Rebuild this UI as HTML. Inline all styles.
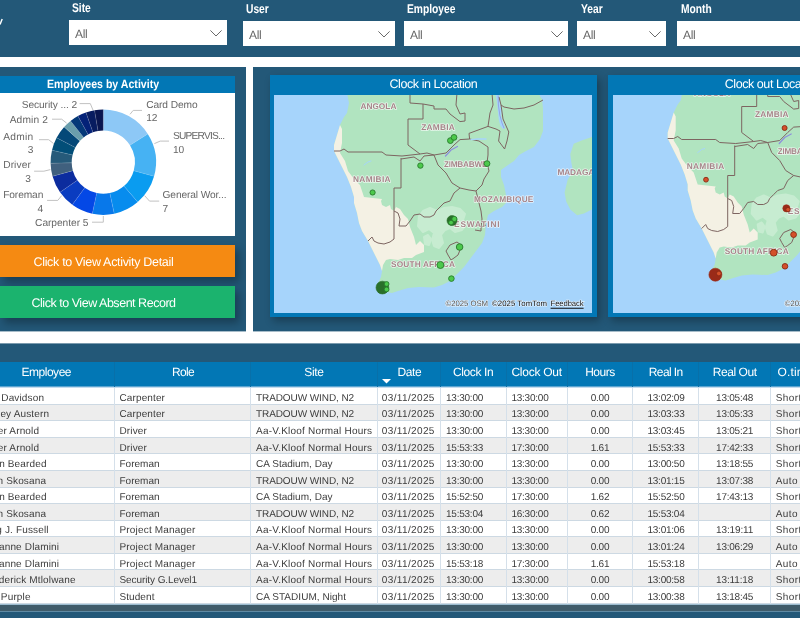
<!DOCTYPE html>
<html>
<head>
<meta charset="utf-8">
<title>Dashboard</title>
<style>
*{box-sizing:border-box;margin:0;padding:0}
html,body{width:800px;height:618px;overflow:hidden;background:#fff;font-family:"Liberation Sans",sans-serif;text-rendering:geometricPrecision}
.abs{position:absolute}
#hdr{position:absolute;left:0;top:0;width:800px;height:57px;background:#235878}
.lbl{position:absolute;color:#fff;font-weight:bold;font-size:12.6px;line-height:13px;top:1.5px;white-space:nowrap;transform:scaleX(.815);transform-origin:0 0}
.sel{position:absolute;background:#fff;height:25px;top:21px}
.sel span{position:absolute;left:6px;top:7px;font-size:12px;line-height:14px;color:#666;letter-spacing:-.3px}
.sel svg{position:absolute;top:10px}
#lp{position:absolute;left:0;top:67px;width:246px;height:264px;background:#235878}
#rp{position:absolute;left:253px;top:67px;width:547px;height:264px;background:#235878;overflow:hidden}
#tp{position:absolute;left:0;top:343px;width:800px;height:275px;background:#235878;box-shadow:inset 0 1px 0 #7b9bae}
.btn{position:absolute;left:0;width:235px;color:#fff;font-size:12.5px;white-space:nowrap;box-shadow:4px 5px 8px rgba(0,0,0,.3)}

#th{position:absolute;left:0;top:19px;width:800px;height:26px;background:#0277b5;border-bottom:1px solid #c5dcee;box-shadow:inset 0 -1px 0 #5ba5d0;color:#fff;font-size:12px;line-height:14px;white-space:nowrap;overflow:hidden;text-rendering:geometricPrecision}
#th span{position:absolute;top:3.4px}
#th i{position:absolute;top:0;width:1px;height:25px;background:#0870a9}
#tb{position:absolute;left:0;top:45px;width:800px;height:216px;background:#fff;overflow:hidden;font-size:10px;color:#3c3c3c;white-space:nowrap;text-rendering:geometricPrecision}
#tb .r{position:absolute;left:0;width:800px;border-bottom:1px solid #cdd9e3;line-height:12px}
#tb .r.a{background:#ededed}
#tb .r span{position:absolute;top:2px}
#tb .t1 span{top:1px}
#tb .t3 span{top:3px}
#tb .t0 span{top:0px}
#tb .t4 span{top:4px}
#tb .t5 span{top:5px}
#tb i{position:absolute;top:0;width:1px;height:100%;background:#d5e0ea}
.dl{position:absolute;font-size:10.2px;line-height:13px;color:#666;white-space:nowrap}
#root{position:absolute;left:0;top:0;width:800px;height:618px;overflow:hidden;will-change:transform}
</style>
</head>
<body>
<div id="root">
<div id="hdr">
  <svg class="abs" style="left:0;top:18px" width="4" height="8" viewBox="0 0 4 8"><path d="M2.2 1L0 6.5" stroke="#fff" stroke-width="1.4" fill="none"/></svg>
  <div class="lbl" style="left:72px">Site</div>
  <div class="lbl" style="left:246px;top:2.5px">User</div>
  <div class="lbl" style="left:407px;top:2.5px">Employee</div>
  <div class="lbl" style="left:581px;top:2.5px">Year</div>
  <div class="lbl" style="left:680.5px;top:2.5px">Month</div>
  <div class="sel" style="left:69px;width:158px;top:20px"><span>All</span><svg style="right:5.4px" width="12" height="7" viewBox="0 0 12 7"><path d="M0.4 0.4L6 6L11.6 0.4" fill="none" stroke="#6a6a6a" stroke-width="1"/></svg></div>
  <div class="sel" style="left:243px;width:152px"><span>All</span><svg style="right:5.5px" width="12" height="7" viewBox="0 0 12 7"><path d="M0.4 0.4L6 6L11.6 0.4" fill="none" stroke="#6a6a6a" stroke-width="1"/></svg></div>
  <div class="sel" style="left:404px;width:164px"><span>All</span><svg style="right:4.6px" width="12" height="7" viewBox="0 0 12 7"><path d="M0.4 0.4L6 6L11.6 0.4" fill="none" stroke="#6a6a6a" stroke-width="1"/></svg></div>
  <div class="sel" style="left:577px;width:89px"><span>All</span><svg style="right:4.6px" width="12" height="7" viewBox="0 0 12 7"><path d="M0.4 0.4L6 6L11.6 0.4" fill="none" stroke="#6a6a6a" stroke-width="1"/></svg></div>
  <div class="sel" style="left:677px;width:130px"><span>All</span></div>
</div>

<div id="lp">
  <!-- chart card -->
  <div class="abs" id="card" style="left:0;top:9px;width:235px;height:160px;background:#fff">
    <div class="abs" style="left:0;top:0;width:235px;height:17px;background:#0277b5;color:#fff;font-weight:bold;font-size:12px;line-height:16px"><span class="abs" style="left:47.1px;top:0;white-space:nowrap;transform:scaleX(.883);transform-origin:0 0">Employees by Activity</span></div>
<!--DONUT-->
<svg class="abs" style="left:0;top:0" width="235" height="160" viewBox="0 0 235 160">
<path d="M103.30 33.50A52.7 52.7 0 0 1 147.80 57.96L129.98 69.27A31.6 31.6 0 0 0 103.30 54.60Z" fill="#8dc8f6"/>
<path d="M147.80 57.96A52.7 52.7 0 0 1 154.06 100.37L133.74 94.70A31.6 31.6 0 0 0 129.98 69.27Z" fill="#46b2f3"/>
<path d="M154.06 100.37A52.7 52.7 0 0 1 137.74 126.09L123.95 110.12A31.6 31.6 0 0 0 133.74 94.70Z" fill="#0a9cf0"/>
<path d="M137.74 126.09A52.7 52.7 0 0 1 114.26 137.75L109.87 117.11A31.6 31.6 0 0 0 123.95 110.12Z" fill="#078cee"/>
<path d="M114.26 137.75A52.7 52.7 0 0 1 92.34 137.75L96.73 117.11A31.6 31.6 0 0 0 109.87 117.11Z" fill="#0878ea"/>
<path d="M92.34 137.75A52.7 52.7 0 0 1 72.32 128.84L84.73 111.76A31.6 31.6 0 0 0 96.73 117.11Z" fill="#0448e6"/>
<path d="M72.32 128.84A52.7 52.7 0 0 1 60.03 116.28L77.35 104.23A31.6 31.6 0 0 0 84.73 111.76Z" fill="#0a3cc0"/>
<path d="M60.03 116.28A52.7 52.7 0 0 1 52.54 100.37L72.86 94.70A31.6 31.6 0 0 0 77.35 104.23Z" fill="#0c2c9e"/>
<path d="M52.54 100.37A52.7 52.7 0 0 1 50.61 87.30L71.71 86.86A31.6 31.6 0 0 0 72.86 94.70Z" fill="#40607e"/>
<path d="M50.61 87.30A52.7 52.7 0 0 1 51.99 74.17L72.53 78.98A31.6 31.6 0 0 0 71.71 86.86Z" fill="#265a7a"/>
<path d="M51.99 74.17A52.7 52.7 0 0 1 56.60 61.78L75.30 71.56A31.6 31.6 0 0 0 72.53 78.98Z" fill="#024e78"/>
<path d="M56.60 61.78A52.7 52.7 0 0 1 64.14 50.94L79.82 65.06A31.6 31.6 0 0 0 75.30 71.56Z" fill="#044878"/>
<path d="M64.14 50.94A52.7 52.7 0 0 1 70.57 44.90L83.67 61.44A31.6 31.6 0 0 0 79.82 65.06Z" fill="#6a9eac"/>
<path d="M70.57 44.90A52.7 52.7 0 0 1 77.91 40.02L88.08 58.51A31.6 31.6 0 0 0 83.67 61.44Z" fill="#043878"/>
<path d="M77.91 40.02A52.7 52.7 0 0 1 85.97 36.43L92.91 56.36A31.6 31.6 0 0 0 88.08 58.51Z" fill="#042278"/>
<path d="M85.97 36.43A52.7 52.7 0 0 1 94.51 34.24L98.03 55.04A31.6 31.6 0 0 0 92.91 56.36Z" fill="#081c60"/>
<path d="M94.51 34.24A52.7 52.7 0 0 1 103.30 33.50L103.30 54.60A31.6 31.6 0 0 0 98.03 55.04Z" fill="#0a1650"/>
<path d="M103.30 33.50L103.30 54.60M147.80 57.96L129.98 69.27M154.06 100.37L133.74 94.70M137.74 126.09L123.95 110.12M114.26 137.75L109.87 117.11M92.34 137.75L96.73 117.11M72.32 128.84L84.73 111.76M60.03 116.28L77.35 104.23M52.54 100.37L72.86 94.70M50.61 87.30L71.71 86.86M51.99 74.17L72.53 78.98M56.60 61.78L75.30 71.56M64.14 50.94L79.82 65.06M70.57 44.90L83.67 61.44M77.91 40.02L88.08 58.51M85.97 36.43L92.91 56.36M94.51 34.24L98.03 55.04" stroke="rgba(255,255,255,.28)" stroke-width=".5" fill="none"/>
<path d="M79.6 27.6L90.3 27.6L93.0 34.1M52.0 43.2L61.7 43.2L66.6 47.1M39.0 63.7L48.7 63.7L53.6 67.6M34.1 95.2L43.9 95.2L50.4 93.6M47.1 124.4L57.8 124.4L61.7 119.6M92.0 146.2L103.3 146.2L103.3 140.0M142.0 34.4L133.2 34.4L130.0 38.3M169.0 65.1L160.2 65.1L154.4 67.6M159.2 125.1L149.5 125.1L144.6 119.6" stroke="#c2c2c2" stroke-width="1" fill="none"/>
</svg>
<span class="dl" style="left:21.8px;top:23.3px;letter-spacing:-0.102px;">Security ... 2</span>
<span class="dl" style="left:9.7px;top:38.3px;letter-spacing:0.132px;">Admin 2</span>
<span class="dl" style="left:3.2px;top:54.5px;letter-spacing:0.282px;">Admin</span>
<span class="dl" style="right:201.5px;top:68.2px;">3</span>
<span class="dl" style="left:3.2px;top:83.4px;letter-spacing:0.088px;">Driver</span>
<span class="dl" style="right:204.1px;top:97.4px;">3</span>
<span class="dl" style="left:3.2px;top:112.7px;letter-spacing:-0.109px;">Foreman</span>
<span class="dl" style="right:191.8px;top:126.7px;">4</span>
<span class="dl" style="left:35.1px;top:141.0px;letter-spacing:-0.047px;">Carpenter 5</span>
<span class="dl" style="left:146.2px;top:23.3px;letter-spacing:-0.077px;">Card Demo</span>
<span class="dl" style="left:146.2px;top:36.3px;">12</span>
<span class="dl" style="left:172.9px;top:53.6px;letter-spacing:-0.775px;">SUPERVIS...</span>
<span class="dl" style="left:172.9px;top:68.2px;">10</span>
<span class="dl" style="left:162.5px;top:113.0px;letter-spacing:-0.107px;">General Wor...</span>
<span class="dl" style="left:162.5px;top:127.3px;">7</span>
<!--/DONUT-->
  </div>
  <div class="btn" style="top:178px;height:32px;line-height:34px;background:#f58a12"><span class="abs" style="left:33.5px;letter-spacing:-0.32px">Click to View Activity Detail</span></div>
  <div class="btn" style="top:219px;height:32px;line-height:34px;background:#1bb36e"><span class="abs" style="left:31.5px;letter-spacing:-0.47px">Click to View Absent Record</span></div>
</div>

<div id="rp">
  <div class="abs" id="m1" style="left:17px;top:8px;width:327px;height:242px;background:#0277b5;box-shadow:3px 4px 8px rgba(0,0,0,.3)">
    <div class="abs" style="left:0;top:0;width:100%;height:20px;color:#fff;font-size:12.5px;line-height:18px;white-space:nowrap"><span class="abs" style="left:119.5px;letter-spacing:-0.43px">Clock in Location</span></div>
    <!--MAP1-->
<svg class="abs" style="left:4px;top:20px" width="318" height="218" viewBox="0 0 318 218">
<rect width="319" height="218" fill="#a6d4fb"/>
<g id="land">
<path d="M73 -2L75 8L73 18L70 22L66 30L63 40L60 50L60 56L63 62L68 72L73 82L77 92L80 102L80 108L83 118L85 128L88 136L94 146L98 154L102 162L106 170L108 176L107 182L104 188L108 194L112 197L118 198L124 196L134 193L145 192L160 192.6L168 190L176 186L184 178L190 172L196 164L202 156L208 148L211 140L212 128L214 120L220 116L228 112L232 108L232 100L230 90L227 82L227 75L234 70L240 66L245 60L252 56L260 52L266 44L269 36L269 14L268 4L264 -2Z" fill="#b1e4c0"/>
<path d="M325 38L317.8 42L307.6 45.4L299.7 48.8L296.3 59L297.4 68L299 76L293.6 85L290.6 97.5L292.2 106.6L296.3 114.5L303.1 120.2L309.9 118.4L317.8 114.5L325 110Z" fill="#b1e4c0"/>
<path d="M145 121L149 116L156 113L163 116L170 113L178 112L186 114L191 119L189 125L192 130L188 135L181 137L176 133L171 135L167 140L169 148L165 153L160 151L158 145L160 138L155 134L149 137L144 131Z" fill="#c7ecd1" stroke="#c7ecd1" stroke-width="2" stroke-linejoin="round"/>
<path d="M150 142L154 140L157 144L155 150L151 149Z" fill="#c7ecd1" stroke="#c7ecd1" stroke-width="2" stroke-linejoin="round"/>
<path d="M66 30L63 40L60 50L60 56L63 62L68 72L73 82L77 92L80 102L80 108L83 118L85 128L88 136L94 146L98 154L102 162L106 170L108 176L109 170L112 165L116 164L124 165L130 163L138 163L142 160L150 157L150 150L146 146L142 150L140 142L136 132L134 124L130 120L126 114L122 112L120 116L117 114L116 110L112 112L108 110L107 106L108 104L90 102L88 96L86 90L80 84L74 76L71 66L66 58L68 48L68 34Z" fill="#f4f1e4"/>
<path d="M221.5 -1L224.9 -1L226.3 9.7L228 14.6L227.1 21L229.6 29.1L231.2 33.2L228.8 34L226.3 30.7L224.7 24.3L223.9 16.2L223.1 8.1Z" fill="#a6d4fb"/>
<path d="M60 56L66 56L70 54L74 57L108 57L112 60L128 61L146 59L153 58L160 60M127 63L127 93L120 93L120 144M127 64L140 62L146 66L150 61L160 60M136 -2L136 8L149 9L149 24L134 24L134 50L146 59M149 9L160 11L160 14M160 14L172 14L176 19L186 26.6L191 26L191 18L186 19L182 10L183 -2M218 -2L219 10L216 18L214 31.4M214 31.4L222 34L226 36L224.6 46L230.6 54L233 46L234.8 37L229 24L227 10M269 5L260 10L250 13L240 14L230 12L227 10L225 2M214 31.4L195 38.4L195.6 44L186 44.6L180 50L172 58L160 60M195.6 44L205 46L214 52L214 60L213 68L215 76L210 84L208 90L202 96M160 60L164 70L172 78L178 88L186 93M186 93L195 95L202 96M186 93L180 98L176 106L170 108L166 112L162 116L160 120L156 122L150 122L146 119L140 120L136 126L132 131L125 131L126 124L124 118L120 116M202 96L204 104L205 108L207 116L208 124L207 132L207 136L201 135M207 132L212 130M94 146L98 142L100 146L104 148L110 149L116 147L120 144M172 156L176 150L183 147L187 150L186 155L184 160L180 163L177 165L174 160L172 156" fill="none" stroke="#7d6561" stroke-width="1" stroke-linejoin="round"/>
<path d="M224.2 1L224.4 10L225.8 20L228 28L230 33" fill="none" stroke="#8d8fdc" stroke-width="0.7" stroke-linecap="round"/>
<path d="M171.5 61L177 55L183.5 51.5" fill="none" stroke="#8d8fdc" stroke-width="1.2" stroke-linecap="round"/>
<path d="M197 44.6L204 44L212 44" fill="none" stroke="#a6d4fb" stroke-width="1.4" stroke-linecap="round"/>
<path d="M90 70L94 67L97 66" fill="none" stroke="#a6d4fb" stroke-width="1" stroke-linecap="round"/>
<g font-family="Liberation Sans" font-weight="bold" font-size="8.3" fill="#a68489" stroke="#fff" stroke-width="1.5" stroke-opacity=".7" paint-order="stroke" stroke-linejoin="round">
<text x="86.4" y="13.9" textLength="36" lengthAdjust="spacing">ANGOLA</text>
<text x="147.2" y="34.9" textLength="33.6" lengthAdjust="spacing">ZAMBIA</text>
<text x="79" y="86.9" textLength="37.6" lengthAdjust="spacing">NAMIBIA</text>
<text x="170" y="71.9" textLength="43.5" lengthAdjust="spacing">ZIMBABWE</text>
<text x="200" y="106.9" textLength="59.4" lengthAdjust="spacing">MOZAMBIQUE</text>
<text x="283.4" y="79.9" textLength="60" lengthAdjust="spacing">MADAGASCAR</text>
<text x="180" y="131.9" textLength="45.6" lengthAdjust="spacing">ESWATINI</text>
<text x="117" y="171.9" textLength="64" lengthAdjust="spacing">SOUTH AFRICA</text>
</g>
</g>
<circle cx="98.6" cy="97.5" r="2.6" fill="#4cc94c" stroke="#277a2b" stroke-width=".9"/>
<circle cx="146.4" cy="70.6" r="2.7" fill="#4cc94c" stroke="#277a2b" stroke-width=".9"/>
<circle cx="176.4" cy="45.6" r="2.9" fill="#4cc94c" stroke="#277a2b" stroke-width=".9"/>
<circle cx="180" cy="42.4" r="2.9" fill="#4cc94c" stroke="#277a2b" stroke-width=".9"/>
<circle cx="213" cy="68.6" r="2.9" fill="#4cc94c" stroke="#277a2b" stroke-width=".9"/>
<circle cx="178" cy="125.6" r="5" fill="#2a6f2a" stroke="#2a6f2a" stroke-width=".6"/>
<circle cx="180.4" cy="124" r="2.6" fill="#4cc94c" stroke="#277a2b" stroke-width=".9"/>
<circle cx="177" cy="127.6" r="2.4" fill="#4cc94c" stroke="#277a2b" stroke-width=".9"/>
<circle cx="185.6" cy="152" r="3.3" fill="#4cc94c" stroke="#277a2b" stroke-width=".9"/>
<circle cx="166.4" cy="170" r="3.5" fill="#4cc94c" stroke="#277a2b" stroke-width=".9"/>
<circle cx="177.4" cy="183.6" r="2.8" fill="#4cc94c" stroke="#277a2b" stroke-width=".9"/>
<circle cx="108.4" cy="192.6" r="6.4" fill="#2a6f2a" stroke="#2a6f2a" stroke-width=".6"/>
<circle cx="112.6" cy="189" r="2.4" fill="#4cc94c" stroke="#277a2b" stroke-width=".9"/>
<circle cx="112.6" cy="194.4" r="2.4" fill="#4cc94c" stroke="#277a2b" stroke-width=".9"/>
<g font-family="Liberation Sans" font-size="7.8">
<text x="171.6" y="211" textLength="42.4" lengthAdjust="spacing" fill="#555" stroke="#fff" stroke-width="1.2" stroke-opacity=".7" paint-order="stroke">©2025 OSM</text>
<text x="218" y="211" textLength="55" lengthAdjust="spacing" fill="#111" stroke="#fff" stroke-width="1.2" stroke-opacity=".7" paint-order="stroke">©2025 TomTom</text>
<text x="276.6" y="211" textLength="33" lengthAdjust="spacing" fill="#111" stroke="#fff" stroke-width="1.2" stroke-opacity=".7" paint-order="stroke">Feedback</text>
<path d="M276.6 213.3H309.6" stroke="#111" stroke-width="1.1"/>
</g>
</svg>
<!--/MAP1-->
  </div>
  <div class="abs" id="m2" style="left:355px;top:8px;width:327px;height:242px;background:#0277b5;box-shadow:3px 4px 8px rgba(0,0,0,.3)">
    <div class="abs" style="left:0;top:0;width:100%;height:20px;color:#fff;font-size:12.5px;line-height:18px;white-space:nowrap"><span class="abs" style="left:116.7px;letter-spacing:-0.43px">Clock out Location</span></div>
    <!--MAP2-->
<svg class="abs" style="left:5px;top:20px" width="318" height="218" viewBox="0 0 318 218">
<rect width="319" height="218" fill="#a6d4fb"/>
<g transform="translate(-5.3 -12.5)"><g>
<path d="M73 -2L75 8L73 18L70 22L66 30L63 40L60 50L60 56L63 62L68 72L73 82L77 92L80 102L80 108L83 118L85 128L88 136L94 146L98 154L102 162L106 170L108 176L107 182L104 188L108 194L112 197L118 198L124 196L134 193L145 192L160 192.6L168 190L176 186L184 178L190 172L196 164L202 156L208 148L211 140L212 128L214 120L220 116L228 112L232 108L232 100L230 90L227 82L227 75L234 70L240 66L245 60L252 56L260 52L266 44L269 36L269 14L268 4L264 -2Z" fill="#b1e4c0"/>
<path d="M325 38L317.8 42L307.6 45.4L299.7 48.8L296.3 59L297.4 68L299 76L293.6 85L290.6 97.5L292.2 106.6L296.3 114.5L303.1 120.2L309.9 118.4L317.8 114.5L325 110Z" fill="#b1e4c0"/>
<path d="M145 121L149 116L156 113L163 116L170 113L178 112L186 114L191 119L189 125L192 130L188 135L181 137L176 133L171 135L167 140L169 148L165 153L160 151L158 145L160 138L155 134L149 137L144 131Z" fill="#c7ecd1" stroke="#c7ecd1" stroke-width="2" stroke-linejoin="round"/>
<path d="M150 142L154 140L157 144L155 150L151 149Z" fill="#c7ecd1" stroke="#c7ecd1" stroke-width="2" stroke-linejoin="round"/>
<path d="M66 30L63 40L60 50L60 56L63 62L68 72L73 82L77 92L80 102L80 108L83 118L85 128L88 136L94 146L98 154L102 162L106 170L108 176L109 170L112 165L116 164L124 165L130 163L138 163L142 160L150 157L150 150L146 146L142 150L140 142L136 132L134 124L130 120L126 114L122 112L120 116L117 114L116 110L112 112L108 110L107 106L108 104L90 102L88 96L86 90L80 84L74 76L71 66L66 58L68 48L68 34Z" fill="#f4f1e4"/>
<path d="M221.5 -1L224.9 -1L226.3 9.7L228 14.6L227.1 21L229.6 29.1L231.2 33.2L228.8 34L226.3 30.7L224.7 24.3L223.9 16.2L223.1 8.1Z" fill="#a6d4fb"/>
<path d="M60 56L66 56L70 54L74 57L108 57L112 60L128 61L146 59L153 58L160 60M127 63L127 93L120 93L120 144M127 64L140 62L146 66L150 61L160 60M136 -2L136 8L149 9L149 24L134 24L134 50L146 59M149 9L160 11L160 14M160 14L172 14L176 19L186 26.6L191 26L191 18L186 19L182 10L183 -2M218 -2L219 10L216 18L214 31.4M214 31.4L222 34L226 36L224.6 46L230.6 54L233 46L234.8 37L229 24L227 10M269 5L260 10L250 13L240 14L230 12L227 10L225 2M214 31.4L195 38.4L195.6 44L186 44.6L180 50L172 58L160 60M195.6 44L205 46L214 52L214 60L213 68L215 76L210 84L208 90L202 96M160 60L164 70L172 78L178 88L186 93M186 93L195 95L202 96M186 93L180 98L176 106L170 108L166 112L162 116L160 120L156 122L150 122L146 119L140 120L136 126L132 131L125 131L126 124L124 118L120 116M202 96L204 104L205 108L207 116L208 124L207 132L207 136L201 135M207 132L212 130M94 146L98 142L100 146L104 148L110 149L116 147L120 144M172 156L176 150L183 147L187 150L186 155L184 160L180 163L177 165L174 160L172 156" fill="none" stroke="#7d6561" stroke-width="1" stroke-linejoin="round"/>
<path d="M224.2 1L224.4 10L225.8 20L228 28L230 33" fill="none" stroke="#8d8fdc" stroke-width="0.7" stroke-linecap="round"/>
<path d="M171.5 61L177 55L183.5 51.5" fill="none" stroke="#8d8fdc" stroke-width="1.2" stroke-linecap="round"/>
<path d="M197 44.6L204 44L212 44" fill="none" stroke="#a6d4fb" stroke-width="1.4" stroke-linecap="round"/>
<path d="M90 70L94 67L97 66" fill="none" stroke="#a6d4fb" stroke-width="1" stroke-linecap="round"/>
<g font-family="Liberation Sans" font-weight="bold" font-size="8.3" fill="#a68489" stroke="#fff" stroke-width="1.5" stroke-opacity=".7" paint-order="stroke" stroke-linejoin="round">
<text x="86.4" y="13.9" textLength="36" lengthAdjust="spacing">ANGOLA</text>
<text x="147.2" y="34.9" textLength="33.6" lengthAdjust="spacing">ZAMBIA</text>
<text x="79" y="86.9" textLength="37.6" lengthAdjust="spacing">NAMIBIA</text>
<text x="170" y="71.9" textLength="43.5" lengthAdjust="spacing">ZIMBABWE</text>
<text x="200" y="106.9" textLength="59.4" lengthAdjust="spacing">MOZAMBIQUE</text>
<text x="283.4" y="79.9" textLength="60" lengthAdjust="spacing">MADAGASCAR</text>
<text x="180" y="131.9" textLength="45.6" lengthAdjust="spacing">ESWATINI</text>
<text x="117" y="171.9" textLength="64" lengthAdjust="spacing">SOUTH AFRICA</text>
</g>
</g></g>
<circle cx="171.6" cy="33" r="2.5" fill="#d4502a" stroke="#8a2a14" stroke-width=".9"/>
<circle cx="93" cy="84.7" r="2.4" fill="#d4502a" stroke="#8a2a14" stroke-width=".9"/>
<circle cx="173.4" cy="113.3" r="3.6" fill="#9a2a18" stroke="#9a2a18" stroke-width=".6"/>
<circle cx="175" cy="114.6" r="2.2" fill="#d4502a" stroke="#8a2a14" stroke-width=".9"/>
<circle cx="180.6" cy="139.6" r="2.9" fill="#d4502a" stroke="#8a2a14" stroke-width=".9"/>
<circle cx="160.7" cy="157.7" r="3.4" fill="#d4502a" stroke="#8a2a14" stroke-width=".9"/>
<circle cx="172" cy="171.3" r="2.8" fill="#d4502a" stroke="#8a2a14" stroke-width=".9"/>
<circle cx="102.4" cy="179.7" r="6.5" fill="#9a2a18" stroke="#9a2a18" stroke-width=".6"/>
<circle cx="105.9" cy="178.5" r="2.4" fill="#d4502a" stroke="#8a2a14" stroke-width=".9"/>
<g font-family="Liberation Sans" font-size="7.8"><text x="171.8" y="211" textLength="42.4" lengthAdjust="spacing" fill="#555" stroke="#fff" stroke-width="1.2" stroke-opacity=".7" paint-order="stroke">©2025 OSM</text></g>
</svg>
<!--/MAP2-->
  </div>
</div>

<div class="abs" style="left:0;top:331px;width:246px;height:1px;background:#a7bcc9"></div>
<div class="abs" style="left:253px;top:331px;width:547px;height:1px;background:#a7bcc9"></div>
<div id="tp">
<div id="th">
<span style="left:21.6px;letter-spacing:-0.497px">Employee</span>
<span style="left:172.0px;letter-spacing:-0.672px">Role</span>
<span style="left:304.25px;letter-spacing:-0.297px">Site</span>
<span style="left:397.6px;letter-spacing:-0.44px">Date</span>
<span style="left:452.95px;letter-spacing:-0.382px">Clock In</span>
<span style="left:511.45px;letter-spacing:-0.265px">Clock Out</span>
<span style="left:585.2px;letter-spacing:-0.483px">Hours</span>
<span style="left:648.8px;letter-spacing:-0.604px">Real In</span>
<span style="left:712.85px;letter-spacing:-0.457px">Real Out</span>
<span style="left:777.5px;letter-spacing:0.15px">O.time</span>
<i style="left:114px"></i>
<i style="left:250px"></i>
<i style="left:377px"></i>
<i style="left:440px"></i>
<i style="left:506px"></i>
<i style="left:567px"></i>
<i style="left:632px"></i>
<i style="left:698px"></i>
<i style="left:770px"></i>
<svg style="position:absolute;left:381.5px;top:17px" width="9" height="5" viewBox="0 0 9 5"><path d="M0 0H9L4.5 4.5Z" fill="#fff"/></svg>
</div>
<div id="tb">
<div class="r t5" style="top:0px;height:17px"><span style="right:755.85px;letter-spacing:0.15px">Davidson</span><span style="left:119.5px;letter-spacing:0.115px;">Carpenter</span><span style="left:256px;letter-spacing:-0.091px;">TRADOUW WIND, N2</span><span style="left:381.8px;letter-spacing:0.369px;">03/11/2025</span><span style="left:446px;letter-spacing:-0.23px;">13:30:00</span><span style="left:511.4px;letter-spacing:-0.23px;">13:30:00</span><span style="left:590.8px;letter-spacing:-0.267px;">0.00</span><span style="left:647.45px;letter-spacing:-0.23px;">13:02:09</span><span style="left:716.05px;letter-spacing:-0.23px;">13:05:48</span><span style="left:775.7px;letter-spacing:.45px">Short</span></div>
<div class="r a t4" style="top:17px;height:16px"><span style="right:750.85px;letter-spacing:0.15px">Tracey Austern</span><span style="left:119.5px;letter-spacing:0.115px;">Carpenter</span><span style="left:256px;letter-spacing:-0.091px;">TRADOUW WIND, N2</span><span style="left:381.8px;letter-spacing:0.369px;">03/11/2025</span><span style="left:446px;letter-spacing:-0.23px;">13:30:00</span><span style="left:511.4px;letter-spacing:-0.23px;">13:30:00</span><span style="left:590.8px;letter-spacing:-0.267px;">0.00</span><span style="left:647.45px;letter-spacing:-0.23px;">13:03:33</span><span style="left:716.05px;letter-spacing:-0.23px;">13:05:33</span><span style="left:775.7px;letter-spacing:.45px">Short</span></div>
<div class="r t5" style="top:33px;height:17px"><span style="right:760.85px;letter-spacing:0.15px">Peter Arnold</span><span style="left:119.5px;letter-spacing:0.138px;">Driver</span><span style="left:256px;letter-spacing:0.215px;">Aa-V.Kloof Normal Hours</span><span style="left:381.8px;letter-spacing:0.369px;">03/11/2025</span><span style="left:446px;letter-spacing:-0.23px;">13:30:00</span><span style="left:511.4px;letter-spacing:-0.23px;">13:30:00</span><span style="left:590.8px;letter-spacing:-0.267px;">0.00</span><span style="left:647.45px;letter-spacing:-0.23px;">13:03:45</span><span style="left:716.05px;letter-spacing:-0.23px;">13:05:21</span><span style="left:775.7px;letter-spacing:.45px">Short</span></div>
<div class="r a t5" style="top:50px;height:16px"><span style="right:760.85px;letter-spacing:0.15px">Peter Arnold</span><span style="left:119.5px;letter-spacing:0.138px;">Driver</span><span style="left:256px;letter-spacing:0.215px;">Aa-V.Kloof Normal Hours</span><span style="left:381.8px;letter-spacing:0.369px;">03/11/2025</span><span style="left:446px;letter-spacing:-0.23px;">15:53:33</span><span style="left:511.4px;letter-spacing:-0.23px;">17:30:00</span><span style="left:590.8px;letter-spacing:-0.267px;">1.61</span><span style="left:647.45px;letter-spacing:-0.23px;">15:53:33</span><span style="left:716.05px;letter-spacing:-0.23px;">17:42:33</span><span style="left:775.7px;letter-spacing:.45px">Short</span></div>
<div class="r t5" style="top:66px;height:17px"><span style="right:753.35px;letter-spacing:0.15px">John Bearded</span><span style="left:119.5px;letter-spacing:-0.002px;">Foreman</span><span style="left:256px;letter-spacing:0.023px;">CA Stadium, Day</span><span style="left:381.8px;letter-spacing:0.369px;">03/11/2025</span><span style="left:446px;letter-spacing:-0.23px;">13:30:00</span><span style="left:511.4px;letter-spacing:-0.23px;">13:30:00</span><span style="left:590.8px;letter-spacing:-0.267px;">0.00</span><span style="left:647.45px;letter-spacing:-0.23px;">13:00:50</span><span style="left:716.05px;letter-spacing:-0.23px;">13:18:55</span><span style="left:775.7px;letter-spacing:.45px">Short</span></div>
<div class="r a t5" style="top:83px;height:17px"><span style="right:753.85px;letter-spacing:0.15px">John Skosana</span><span style="left:119.5px;letter-spacing:-0.002px;">Foreman</span><span style="left:256px;letter-spacing:-0.091px;">TRADOUW WIND, N2</span><span style="left:381.8px;letter-spacing:0.369px;">03/11/2025</span><span style="left:446px;letter-spacing:-0.23px;">13:30:00</span><span style="left:511.4px;letter-spacing:-0.23px;">13:30:00</span><span style="left:590.8px;letter-spacing:-0.267px;">0.00</span><span style="left:647.45px;letter-spacing:-0.23px;">13:01:15</span><span style="left:716.05px;letter-spacing:-0.23px;">13:07:38</span><span style="left:775.7px;letter-spacing:.45px">Auto</span></div>
<div class="r t4" style="top:100px;height:16px"><span style="right:753.35px;letter-spacing:0.15px">John Bearded</span><span style="left:119.5px;letter-spacing:-0.002px;">Foreman</span><span style="left:256px;letter-spacing:0.023px;">CA Stadium, Day</span><span style="left:381.8px;letter-spacing:0.369px;">03/11/2025</span><span style="left:446px;letter-spacing:-0.23px;">15:52:50</span><span style="left:511.4px;letter-spacing:-0.23px;">17:30:00</span><span style="left:590.8px;letter-spacing:-0.267px;">1.62</span><span style="left:647.45px;letter-spacing:-0.23px;">15:52:50</span><span style="left:716.05px;letter-spacing:-0.23px;">17:43:13</span><span style="left:775.7px;letter-spacing:.45px">Short</span></div>
<div class="r a t5" style="top:116px;height:17px"><span style="right:753.85px;letter-spacing:0.15px">John Skosana</span><span style="left:119.5px;letter-spacing:-0.002px;">Foreman</span><span style="left:256px;letter-spacing:-0.091px;">TRADOUW WIND, N2</span><span style="left:381.8px;letter-spacing:0.369px;">03/11/2025</span><span style="left:446px;letter-spacing:-0.23px;">15:53:04</span><span style="left:511.4px;letter-spacing:-0.23px;">16:30:00</span><span style="left:590.8px;letter-spacing:-0.267px;">0.62</span><span style="left:647.45px;letter-spacing:-0.23px;">15:53:04</span><span style="left:775.7px;letter-spacing:.45px">Auto</span></div>
<div class="r t4" style="top:133px;height:16px"><span style="right:751.35px;letter-spacing:0.15px">Craig J. Fussell</span><span style="left:119.5px;letter-spacing:0.175px;">Project Manager</span><span style="left:256px;letter-spacing:0.215px;">Aa-V.Kloof Normal Hours</span><span style="left:381.8px;letter-spacing:0.369px;">03/11/2025</span><span style="left:446px;letter-spacing:-0.23px;">13:30:00</span><span style="left:511.4px;letter-spacing:-0.23px;">13:30:00</span><span style="left:590.8px;letter-spacing:-0.267px;">0.00</span><span style="left:647.45px;letter-spacing:-0.23px;">13:01:06</span><span style="left:716.05px;letter-spacing:-0.136px;">13:19:11</span><span style="left:775.7px;letter-spacing:.45px">Short</span></div>
<div class="r a t5" style="top:149px;height:17px"><span style="right:740.85px;letter-spacing:0.15px">Joanne Dlamini</span><span style="left:119.5px;letter-spacing:0.175px;">Project Manager</span><span style="left:256px;letter-spacing:0.215px;">Aa-V.Kloof Normal Hours</span><span style="left:381.8px;letter-spacing:0.369px;">03/11/2025</span><span style="left:446px;letter-spacing:-0.23px;">13:30:00</span><span style="left:511.4px;letter-spacing:-0.23px;">13:30:00</span><span style="left:590.8px;letter-spacing:-0.267px;">0.00</span><span style="left:647.45px;letter-spacing:-0.23px;">13:01:24</span><span style="left:716.05px;letter-spacing:-0.23px;">13:06:29</span><span style="left:775.7px;letter-spacing:.45px">Auto</span></div>
<div class="r t5" style="top:166px;height:16px"><span style="right:740.85px;letter-spacing:0.15px">Joanne Dlamini</span><span style="left:119.5px;letter-spacing:0.175px;">Project Manager</span><span style="left:256px;letter-spacing:0.215px;">Aa-V.Kloof Normal Hours</span><span style="left:381.8px;letter-spacing:0.369px;">03/11/2025</span><span style="left:446px;letter-spacing:-0.23px;">15:53:18</span><span style="left:511.4px;letter-spacing:-0.23px;">17:30:00</span><span style="left:590.8px;letter-spacing:-0.267px;">1.61</span><span style="left:647.45px;letter-spacing:-0.23px;">15:53:18</span><span style="left:775.7px;letter-spacing:.45px">Auto</span></div>
<div class="r a t5" style="top:182px;height:17px"><span style="right:724.35px;letter-spacing:0.15px">Frederick Mtlolwane</span><span style="left:119.5px;letter-spacing:-0.085px;">Security G.Level1</span><span style="left:256px;letter-spacing:0.215px;">Aa-V.Kloof Normal Hours</span><span style="left:381.8px;letter-spacing:0.369px;">03/11/2025</span><span style="left:446px;letter-spacing:-0.23px;">13:30:00</span><span style="left:511.4px;letter-spacing:-0.23px;">13:30:00</span><span style="left:590.8px;letter-spacing:-0.267px;">0.00</span><span style="left:647.45px;letter-spacing:-0.23px;">13:00:58</span><span style="left:716.05px;letter-spacing:-0.136px;">13:11:18</span><span style="left:775.7px;letter-spacing:.45px">Short</span></div>
<div class="r t5" style="top:199px;height:17px"><span style="right:769.35px;letter-spacing:0.15px">Purple</span><span style="left:119.5px;letter-spacing:0.074px;">Student</span><span style="left:256px;letter-spacing:0.042px;">CA STADIUM, Night</span><span style="left:381.8px;letter-spacing:0.369px;">03/11/2025</span><span style="left:446px;letter-spacing:-0.23px;">13:30:00</span><span style="left:511.4px;letter-spacing:-0.23px;">13:30:00</span><span style="left:590.8px;letter-spacing:-0.267px;">0.00</span><span style="left:647.45px;letter-spacing:-0.23px;">13:00:38</span><span style="left:716.05px;letter-spacing:-0.23px;">13:18:45</span><span style="left:775.7px;letter-spacing:.45px">Short</span></div>
<i style="left:114px"></i>
<i style="left:250px"></i>
<i style="left:377px"></i>
<i style="left:440px"></i>
<i style="left:506px"></i>
<i style="left:567px"></i>
<i style="left:632px"></i>
<i style="left:698px"></i>
<i style="left:770px"></i>
</div>
<div class="abs" style="left:0;top:261px;width:800px;height:1px;background:#9dbdd0"></div><div class="abs" style="left:0;top:262px;width:800px;height:6px;background:#405c6a"></div><div class="abs" style="left:0;top:268px;width:800px;height:1px;background:#5f8aa3"></div>
</div>
<!--END-->
</div>
</body>
</html>
